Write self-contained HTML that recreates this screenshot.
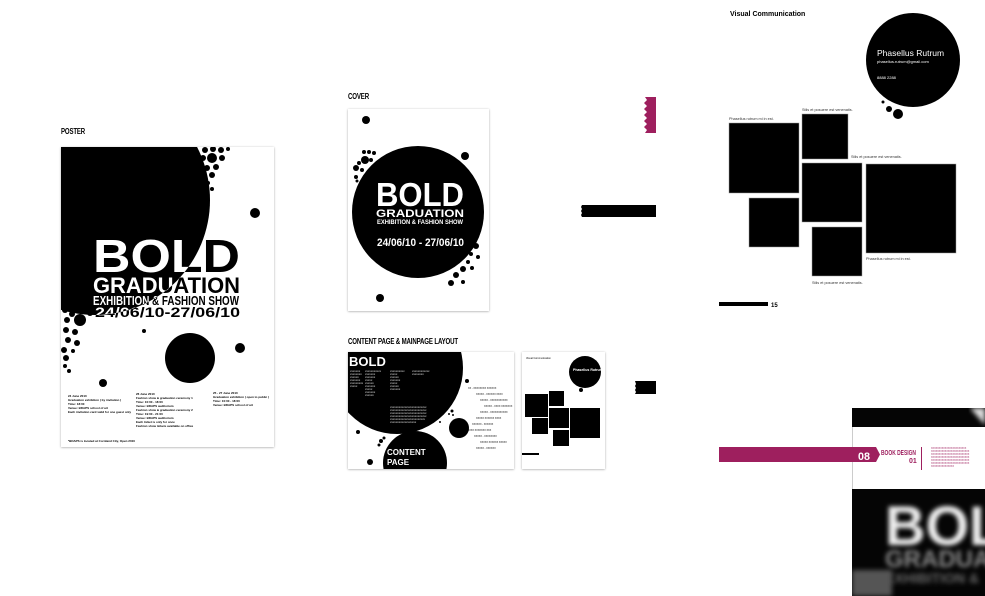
<!DOCTYPE html>
<html><head><meta charset="utf-8"><style>
html,body{margin:0;padding:0;background:#fff;width:985px;height:596px;overflow:hidden}
svg{display:block;font-family:"Liberation Sans",Arial,sans-serif}
.lab{font-family:"Liberation Sans",sans-serif;font-weight:bold;font-size:8px;letter-spacing:-0.2px}
</style></head><body>
<svg width="985" height="596" viewBox="0 0 985 596" xmlns="http://www.w3.org/2000/svg">
<defs>
<filter id="sh" x="-5%" y="-5%" width="110%" height="110%"><feDropShadow dx="0" dy="0.5" stdDeviation="1" flood-color="#000" flood-opacity="0.35"/></filter>
<clipPath id="pc"><rect x="61" y="147" width="213" height="300"/></clipPath>
<clipPath id="pcirc"><circle cx="95" cy="200" r="115"/></clipPath>
<clipPath id="cc"><rect x="348" y="352" width="166" height="117"/></clipPath>
<clipPath id="bc"><rect x="852" y="408" width="133" height="188"/></clipPath>
<filter id="blur"><feGaussianBlur stdDeviation="2.5"/></filter>
</defs>

<!-- POSTER -->
<text x="61" y="134" class="lab" textLength="24" lengthAdjust="spacingAndGlyphs">POSTER</text>
<rect x="61" y="147" width="213" height="300" fill="#fff" filter="url(#sh)"/>
<g clip-path="url(#pc)">
<circle cx="95" cy="200" r="115" fill="#000"/>
<g fill="#000">
<circle cx="205" cy="150" r="3"/><circle cx="213" cy="149" r="3"/><circle cx="221" cy="150" r="3"/><circle cx="228" cy="149" r="2"/>
<circle cx="203" cy="158" r="3"/><circle cx="212" cy="158" r="5"/><circle cx="222" cy="158" r="3"/>
<circle cx="207" cy="168" r="3"/><circle cx="216" cy="167" r="3"/><circle cx="212" cy="175" r="3"/><circle cx="208" cy="183" r="2"/><circle cx="212" cy="189" r="2"/>
<circle cx="255" cy="213" r="5"/>
<circle cx="65" cy="310" r="3"/><circle cx="72" cy="314" r="3"/><circle cx="80" cy="320" r="6"/><circle cx="67" cy="320" r="3"/><circle cx="90" cy="313" r="3"/>
<circle cx="66" cy="330" r="3"/><circle cx="75" cy="332" r="3"/><circle cx="68" cy="340" r="3"/><circle cx="77" cy="343" r="3"/>
<circle cx="64" cy="350" r="3"/><circle cx="73" cy="351" r="2"/><circle cx="66" cy="358" r="3"/><circle cx="65" cy="366" r="2"/><circle cx="69" cy="371" r="2"/>
<circle cx="144" cy="331" r="2"/><circle cx="190" cy="358" r="25"/><circle cx="240" cy="348" r="5"/><circle cx="103" cy="383" r="4"/>
</g>
<g font-weight="bold" text-anchor="start">
<text x="93" y="272" font-size="46" textLength="147" lengthAdjust="spacingAndGlyphs">BOLD</text>
<text x="93" y="293" font-size="22" textLength="147" lengthAdjust="spacingAndGlyphs">GRADUATION</text>
<text x="93" y="305" font-size="13" textLength="146" lengthAdjust="spacingAndGlyphs">EXHIBITION &amp; FASHION SHOW</text>
<text x="95" y="317" font-size="14" textLength="145" lengthAdjust="spacingAndGlyphs">24/06/10-27/06/10</text>
</g>
<g font-weight="bold" fill="#fff" clip-path="url(#pcirc)">
<text x="93" y="272" font-size="46" textLength="147" lengthAdjust="spacingAndGlyphs">BOLD</text>
<text x="93" y="293" font-size="22" textLength="147" lengthAdjust="spacingAndGlyphs">GRADUATION</text>
<text x="93" y="305" font-size="13" textLength="146" lengthAdjust="spacingAndGlyphs">EXHIBITION &amp; FASHION SHOW</text>
<text x="95" y="317" font-size="14" textLength="145" lengthAdjust="spacingAndGlyphs">24/06/10-27/06/10</text>
</g>
<g font-size="3" font-weight="bold">
<text x="68" y="397">24 June 2010</text><text x="68" y="401">Graduation exhibition ( by invitation )</text><text x="68" y="405">Time: 18:00</text><text x="68" y="409">Venue: BDAPS school of art</text><text x="68" y="413">Each invitation card valid for one guest only</text>
<text x="136" y="395">26 June 2010</text><text x="136" y="399">Fashion show &amp; graduation ceremony 1</text><text x="136" y="403">Time: 10:00 - 18:00</text><text x="136" y="407">Venue: BDAPS auditorium</text><text x="136" y="411">Fashion show &amp; graduation ceremony 2</text><text x="136" y="415">Time: 19:00 - 21:00</text><text x="136" y="419">Venue: BDAPS auditorium</text><text x="136" y="423">Each ticket is only for once</text><text x="136" y="427">Fashion show tickets available on office</text>
<text x="213" y="394">25 - 27 June 2010</text><text x="213" y="398">Graduation exhibition ( open to public )</text><text x="213" y="402">Time: 10:00 - 18:00</text><text x="213" y="406">Venue: BDAPS school of art</text>
<text x="68" y="442">*BDAPS is located at Cornland City, Open 2010</text>
</g>
</g>

<!-- COVER -->
<text x="348" y="99" class="lab" textLength="21" lengthAdjust="spacingAndGlyphs">COVER</text>
<rect x="348" y="109" width="141" height="202" fill="#fff" filter="url(#sh)"/>
<circle cx="418" cy="212" r="66" fill="#000"/>
<g fill="#000">
<circle cx="366" cy="120" r="4"/><circle cx="465" cy="156" r="4"/><circle cx="380" cy="298" r="4"/>
<circle cx="364" cy="152" r="2"/><circle cx="369" cy="152" r="2"/><circle cx="374" cy="153" r="2"/><circle cx="365" cy="160" r="4"/><circle cx="359" cy="163" r="2"/><circle cx="356" cy="168" r="3"/><circle cx="362" cy="170" r="2"/><circle cx="356" cy="177" r="2"/><circle cx="357" cy="181" r="1.5"/><circle cx="371" cy="160" r="2"/>
<circle cx="476" cy="246" r="3"/><circle cx="471" cy="254" r="2"/><circle cx="478" cy="257" r="2"/><circle cx="468" cy="262" r="2"/><circle cx="472" cy="268" r="2"/><circle cx="463" cy="269" r="3"/><circle cx="456" cy="275" r="3"/><circle cx="451" cy="283" r="3"/><circle cx="463" cy="282" r="2"/><circle cx="476" cy="237" r="1.5"/>
</g>
<g fill="#fff" font-weight="bold">
<text x="376" y="206" font-size="33" textLength="88" lengthAdjust="spacingAndGlyphs">BOLD</text>
<text x="376" y="217" font-size="11" textLength="88" lengthAdjust="spacingAndGlyphs">GRADUATION</text>
<text x="377" y="224" font-size="6" textLength="86" lengthAdjust="spacingAndGlyphs">EXHIBITION &amp; FASHION SHOW</text>
<text x="377" y="246" font-size="11" textLength="87" lengthAdjust="spacingAndGlyphs">24/06/10 - 27/06/10</text>
</g>
<path d="M645,97 H656 V133 H645 L647,130 L644,127 L647,124 L644,121 L647,118 L644,115 L647,112 L644,109 L647,106 L644,103 L647,100 Z" fill="#9e1f5e"/>
<path d="M582,205 H656 V217 H582 L581,215 L582,213 L581,211 L582,209 L581,207 Z" fill="#000"/>

<!-- CONTENT -->
<text x="348" y="344" class="lab" textLength="110" lengthAdjust="spacingAndGlyphs">CONTENT PAGE &amp; MAINPAGE LAYOUT</text>
<rect x="348" y="352" width="166" height="117" fill="#fff" filter="url(#sh)"/>
<g clip-path="url(#cc)">
<circle cx="397" cy="368" r="66" fill="#000"/>
<circle cx="415" cy="463" r="32" fill="#000"/>
<circle cx="459" cy="428" r="10" fill="#000"/>
<g fill="#000"><circle cx="467" cy="381" r="2"/><circle cx="358" cy="432" r="2"/><circle cx="381" cy="441" r="2"/><circle cx="384" cy="438" r="1.5"/><circle cx="379" cy="445" r="1.5"/><circle cx="370" cy="462" r="3"/><circle cx="452" cy="411" r="1.5"/><circle cx="449" cy="414" r="1"/><circle cx="453" cy="415" r="1"/><circle cx="440" cy="422" r="1"/></g>
<text x="349" y="366" fill="#fff" font-weight="bold" font-size="13">BOLD</text>
<g fill="#fff" font-size="2.2">
<text x="350" y="372">XXXXXXX</text><text x="350" y="375">XXXXXXXX</text><text x="350" y="378">XXXXXX</text><text x="350" y="381">XXXXXXX</text><text x="350" y="384">XXXXXXXXX</text><text x="350" y="387">XXXXX</text>
<text x="365" y="372">XXXXXXXXXXX</text><text x="365" y="375">XXXXXXX</text><text x="365" y="378">XXXXXXX</text><text x="365" y="381">XXXXX</text><text x="365" y="384">XXXXXX</text><text x="365" y="387">XXXXXXX</text><text x="365" y="390">XXXXX</text><text x="365" y="393">XXXXXXX</text><text x="365" y="396">XXXXXX</text>
<text x="390" y="372">XXXXXXXXXX</text><text x="390" y="375">XXXXX</text><text x="390" y="378">XXXXXX</text><text x="390" y="381">XXXXXXX</text><text x="390" y="384">XXXXX</text><text x="390" y="387">XXXXXX</text><text x="390" y="390">XXXXXXX</text>
<text x="412" y="372">XXXXXXXXXXXX</text><text x="412" y="375">XXXXXXXX</text>
<text x="390" y="408">XXXXXXXXXXXXXXXXXXXXXXXXX</text><text x="390" y="411">XXXXXXXXXXXXXXXXXXXXXXXXX</text><text x="390" y="414">XXXXXXXXXXXXXXXXXXXXXXXXX</text><text x="390" y="417">XXXXXXXXXXXXXXXXXXXXXXXXX</text><text x="390" y="420">XXXXXXXXXXXXXXXXXXXXXXXX</text><text x="390" y="423">XXXXXXXXXXXXXXXXXX</text>
</g>
<g fill="#000" font-size="2.4">
<text x="468" y="389">XX - XXXXXXXX XXXXXX</text><text x="476" y="395">XXXXX - XXXXXX XXXX</text><text x="480" y="401">XXXXX - XXXXXXXXXXX</text><text x="484" y="407">XXXXX - XXXX XXXXXXX</text><text x="480" y="413">XXXXX - XXXXXXXXXXX</text><text x="476" y="419">XXXXX XXXXXX XXXX</text><text x="472" y="425">XXXXXX - XXXXXX</text><text x="466" y="431">XXXXX XXXXXXX XXX</text><text x="474" y="437">XXXXX - XXXXXXXX</text><text x="480" y="443">XXXXX XXXXXX XXXXX</text><text x="476" y="449">XXXXX - XXXXXX</text>
</g>
<g fill="#fff" font-weight="bold" font-size="8"><text x="387" y="455">CONTENT</text><text x="387" y="465">PAGE</text></g>
</g>
<rect x="522" y="352" width="83" height="117" fill="#fff" filter="url(#sh)"/>
<text x="526" y="359" font-size="2.5">Visual Communication</text>
<circle cx="585" cy="372" r="16" fill="#000"/>
<text x="573" y="371" fill="#fff" font-size="3.5" font-weight="bold">Phasellus Rutrum</text>
<circle cx="581" cy="390" r="2" fill="#000"/>
<g fill="#000"><rect x="525" y="394" width="23" height="23"/><rect x="549" y="391" width="15" height="15"/><rect x="549" y="408" width="20" height="20"/><rect x="570" y="408" width="30" height="30"/><rect x="532" y="418" width="16" height="16"/><rect x="553" y="430" width="16" height="16"/><rect x="522" y="453" width="17" height="2"/></g>
<path d="M635,381 H656 V394 H635 L636,392 L635,390 L636,388 L635,386 L636,384 Z" fill="#000"/>

<!-- RIGHT PAGE -->
<text x="730" y="16" font-size="7" font-weight="bold">Visual Communication</text>
<circle cx="913" cy="60" r="47" fill="#000"/>
<text x="877" y="56" fill="#fff" font-size="8.5">Phasellus Rutrum</text>
<text x="877" y="63" fill="#fff" font-size="4">phasellus.rutrum@gmail.com</text>
<text x="877" y="79" fill="#fff" font-size="4">8888 2288</text>
<circle cx="883" cy="102" r="1.5" fill="#000"/><circle cx="889" cy="109" r="3" fill="#000"/><circle cx="898" cy="114" r="5" fill="#000"/>
<g fill="#000" stroke="#999" stroke-width="0.5">
<rect x="729" y="123" width="70" height="70"/><rect x="802" y="114" width="46" height="45"/><rect x="802" y="163" width="60" height="59"/><rect x="866" y="164" width="90" height="89"/><rect x="749" y="198" width="50" height="49"/><rect x="812" y="227" width="50" height="49"/>
</g>
<g font-size="3.8" fill="#333">
<text x="729" y="120">Phasellus rutrum mi in est.</text><text x="802" y="111">Stlis et posuere est venenatis.</text><text x="851" y="158">Stlis et posuere est venenatis.</text><text x="866" y="260">Phasellus rutrum mi in est.</text><text x="812" y="284">Stlis et posuere est venenatis.</text>
</g>
<rect x="719" y="302" width="49" height="4" fill="#000"/>
<text x="771" y="307" font-size="6" font-weight="bold">15</text>

<!-- BOOK DESIGN -->
<g clip-path="url(#bc)">
<rect x="852" y="408" width="133" height="188" fill="#fff"/>
<rect x="852" y="408" width="133" height="19" fill="#050505"/>
<polygon points="970,408 985,408 985,425" fill="#ddd" filter="url(#blur)"/>
<line x1="852.5" y1="427" x2="852.5" y2="489" stroke="#ccc"/>
<text x="881" y="455" fill="#9e1f5e" font-size="7" font-weight="bold" textLength="35" lengthAdjust="spacingAndGlyphs">BOOK DESIGN</text>
<text x="909" y="463" fill="#9e1f5e" font-size="7" font-weight="bold">01</text>
<rect x="921" y="447" width="1" height="23" fill="#9e1f5e"/>
<g fill="#9e1f5e" font-size="2.3"><text x="931" y="449">XXXXXXXXXXXXXXXXXXXXXXX</text><text x="931" y="452">XXXXXXXXXXXXXXXXXXXXXXXXX</text><text x="931" y="455">XXXXXXXXXXXXXXXXXXXXXXXXX</text><text x="931" y="458">XXXXXXXXXXXXXXXXXXXXXXXXX</text><text x="931" y="461">XXXXXXXXXXXXXXXXXXXXXXXXX</text><text x="931" y="464">XXXXXXXXXXXXXXXXXXXXXXXXX</text><text x="931" y="467">XXXXXXXXXXXXXXX</text></g>
<rect x="852" y="489" width="133" height="107" fill="#050505"/>
<g filter="url(#blur)" fill="#eee" font-weight="bold">
<text x="885" y="545" font-size="56">BOL</text>
<text x="885" y="567" font-size="24" fill="#888">GRADUA</text>
<text x="885" y="583" font-size="14" fill="#666">EXHIBITION &amp;</text>
<rect x="852" y="570" width="40" height="26" fill="#555"/>
</g>
</g>
<path d="M719,447 H876 L880,454.5 L876,462 H719 Z" fill="#9e1f5e"/>
<text x="858" y="460" fill="#fff" font-size="11" font-weight="bold" textLength="12" lengthAdjust="spacingAndGlyphs">08</text>
</svg>
</body></html>
